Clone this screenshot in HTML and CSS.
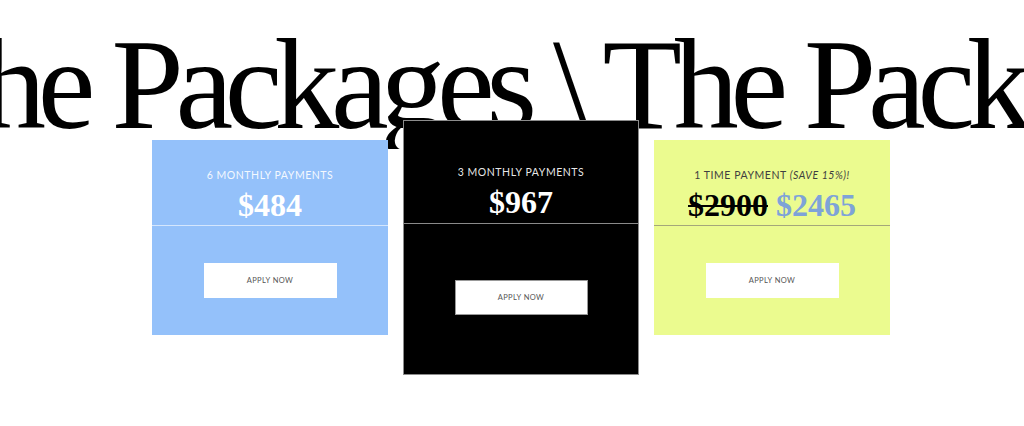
FILE: index.html
```html
<!DOCTYPE html>
<html lang="en">
<head>
<meta charset="utf-8">
<title>The Packages</title>
<link rel="stylesheet" href="styles.css">
</head>
<body>
<section class="packages">
  <div class="marquee">
    <h1 class="marquee-text">The Packages \ The Packages \ The Packages</h1>
  </div>
  <div class="cards">
    <div class="card card-blue">
      <div class="card-head">
        <p class="label">6 Monthly Payments</p>
        <p class="price">$484</p>
      </div>
      <div class="card-body">
        <a class="btn" href="#">Apply Now</a>
      </div>
    </div>
    <div class="card card-black">
      <div class="card-head">
        <p class="label">3 Monthly Payments</p>
        <p class="price">$967</p>
      </div>
      <div class="card-body">
        <a class="btn" href="#">Apply Now</a>
      </div>
    </div>
    <div class="card card-yellow">
      <div class="card-head">
        <p class="label">1 Time Payment <em>(Save 15%)!</em></p>
        <p class="price"><s class="old">$2900</s> <span class="new">$2465</span></p>
      </div>
      <div class="card-body">
        <a class="btn" href="#">Apply Now</a>
      </div>
    </div>
  </div>
</section>
</body>
</html>
```

FILE: styles.css
```css
* { box-sizing: border-box; }
html, body { margin: 0; padding: 0; background: #fff; }
body { width: 1024px; height: 426px; overflow: hidden; }

.packages { position: relative; }

.marquee {
  overflow: hidden;
  padding-top: 19px;
  height: 149px;
}
.marquee-text {
  margin: 0 0 0 -90px;
  white-space: nowrap;
  font-family: "Liberation Serif", "Times New Roman", serif;
  font-weight: 400;
  font-size: 130px;
  line-height: 130px;
  letter-spacing: -8.3px;
  color: #000;
}

.cards {
  position: relative;
  z-index: 1;
  display: flex;
  justify-content: center;
  align-items: flex-start;
  gap: 15px;
  padding-left: 18px;
  margin-top: -9px;
}

.card {
  width: 236px;
  text-align: center;
}
.card-head {
  padding: 28px 10px 2px;
  border-bottom: 1px solid rgba(255,255,255,0.6);
}
.card-body {
  padding: 37px 0 37px;
  display: flex;
  justify-content: center;
}

.label {
  margin: 0;
  font-family: "Lato", "Open Sans", sans-serif;
  font-size: 10.5px;
  line-height: 14px;
  letter-spacing: 0.55px;
  text-transform: uppercase;
  color: rgba(255,255,255,0.92);
}
.label em { font-style: italic; }

.price {
  margin: 5px 0 0;
  font-family: "Liberation Serif", "Times New Roman", serif;
  font-weight: 700;
  font-size: 32px;
  line-height: 36px;
  color: #fff;
}

.btn {
  display: flex;
  align-items: center;
  justify-content: center;
  width: 133px;
  height: 35px;
  background: #fff;
  color: #555;
  text-decoration: none;
  font-family: "Lato", "Open Sans", sans-serif;
  font-size: 7.5px;
  letter-spacing: 0.4px;
  text-transform: uppercase;
}

.card-blue { background: #94c1fa; }

.card-black {
  background: #000;
  border: 1px solid #8c8c8c;
  margin-top: -20px;
}
.card-black .card-head {
  padding-top: 44px;
  padding-bottom: 3px;
  border-bottom-color: #8a8a8a;
}
.card-black .card-body {
  padding-top: 56px;
  padding-bottom: 59px;
}
.card-black .btn { border: 1px solid #999; }

.card-yellow { background: #ebfb8f; }
.card-yellow .card-head { border-bottom-color: #a4a77a; }
.card-yellow .label { color: #3f3f3f; }
.card-yellow .old { color: #000; text-decoration-thickness: 2px; }
.card-yellow .new { color: #7ea3d8; }
```
